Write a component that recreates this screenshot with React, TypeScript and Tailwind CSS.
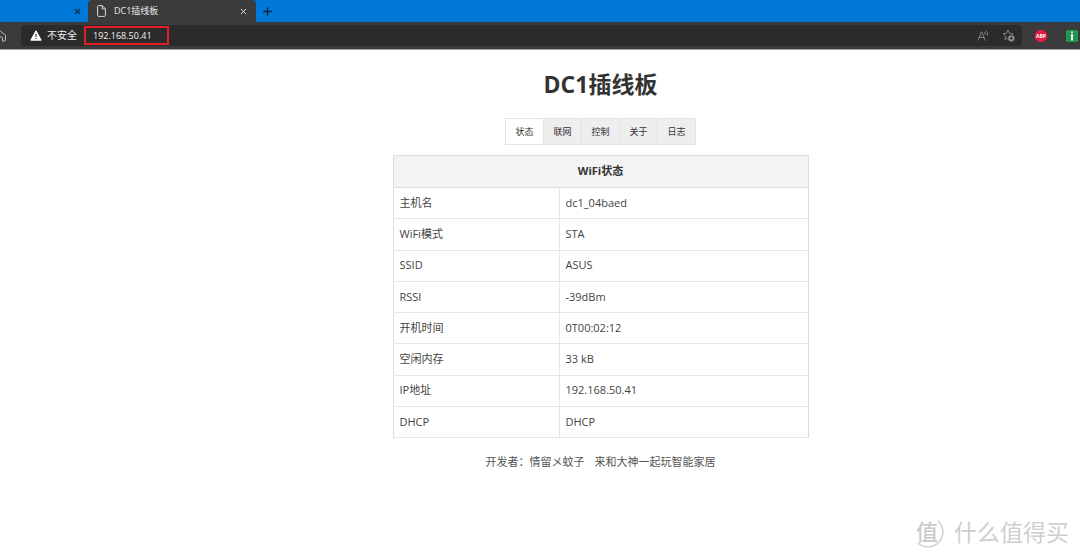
import { Plus, X } from 'lucide-react'

const tabs = ['状态', '联网', '控制', '关于', '日志']

const rows = [
    ['主机名', 'dc1_04baed'],
    ['WiFi模式', 'STA'],
    ['SSID', 'ASUS'],
    ['RSSI', '-39dBm'],
    ['开机时间', '0T00:02:12'],
    ['空闲内存', '33 kB'],
    ['IP地址', '192.168.50.41'],
    ['DHCP', 'DHCP'],
]

function TabStrip() {
    return (
        <div className="flex h-[22px] items-stretch bg-[#0078d7]">
            <div className="flex w-[88px] items-center justify-end pr-[6px]">
                <button aria-label="关闭标签页" className="text-[#10304c]">
                    <X size={9} strokeWidth={3} />
                </button>
            </div>
            <div className="flex w-[168px] items-center rounded-t bg-[#3b3b3b] pr-2 pl-[9px] text-[#e6e6e6]">
                <svg width="9" height="12" viewBox="0 0 9 12" fill="none" stroke="#d8d8d8" strokeLinejoin="round">
                    <path d="M1.5.6h3.8l3.1 3.2v6.6a1 1 0 0 1-1 1H1.6a1 1 0 0 1-1-1V1.6a1 1 0 0 1 .9-1z" />
                    <path d="M5.2.8v3.1h3" />
                </svg>
                <span className="ml-2 flex-1 text-[9px]">DC1插线板</span>
                <button aria-label="关闭标签页">
                    <X size={9} strokeWidth={2.5} />
                </button>
            </div>
            <button aria-label="新建标签页" className="ml-[5px] text-[#08263f]">
                <Plus size={13} strokeWidth={2.5} />
            </button>
        </div>
    )
}

function Toolbar() {
    return (
        <div className="flex h-7 items-center border-b border-[#a5a5a5] bg-[#3b3b3b]">
            <button aria-label="主页" className="flex w-[21px] shrink-0">
                <svg width="7" height="12" viewBox="0 0 7 12" fill="none" stroke="#bdbdbd" strokeLinejoin="round">
                    <path d="M-5 4.8 0 .8l5.5 4.4v5a.8.8 0 0 1-.8.8H2.5V7.8a.8.8 0 0 0-.8-.8H-1" />
                </svg>
            </button>
            <div className="flex h-[21px] flex-1 items-center rounded bg-[#2b2b2b] pr-[7px] pl-[9px]">
                <svg width="12" height="11" viewBox="0 0 12 11">
                    <path d="M6 .8 11.2 10.2H.8z" fill="#fff" stroke="#fff" strokeWidth="1" strokeLinejoin="round" />
                    <path d="M6 3.7v3.2M6 8v1.1" stroke="#2b2b2b" strokeWidth="1.1" />
                </svg>
                <span className="ml-[5px] text-[10px] text-[#f2f2f2]">不安全</span>
                <label className="ml-[7px] flex h-[19px] w-[85px] items-center border-2 border-[#e01e26] pl-[7px]">
                    <input
                        aria-label="地址"
                        defaultValue="192.168.50.41"
                        className="w-full text-[9px] text-[#f2f2f2] outline-none"
                    />
                </label>
                <div className="flex-1" />
                <button aria-label="朗读此页内容">
                    <svg width="12" height="12" viewBox="0 0 12 12" fill="none" stroke="#8c8c8c" strokeWidth="0.9">
                        <path d="M1 10.5 4.4 1.8h.4l3.4 8.7M2.2 7.5h4.8" />
                        <path d="M7.4 2.2q1 1 .8 2.6M9 .8q2 1.9 1.5 4.6" />
                    </svg>
                </button>
                <button aria-label="收藏" className="ml-[13px]">
                    <svg width="13" height="13" viewBox="0 0 13 13" fill="none">
                        <path
                            d="M6 1 7.5 4.2l3.5.5-2.5 2.4.6 3.5L6 9l-3.1 1.6.6-3.5L1 4.7l3.5-.5z"
                            stroke="#8c8c8c"
                            strokeWidth="0.9"
                            strokeLinejoin="round"
                        />
                        <circle cx="9.3" cy="9.3" r="3.4" fill="#9a9a9a" stroke="#2b2b2b" strokeWidth="0.5" />
                        <path d="M7.6 9.3h3.4M9.3 7.6v3.4" stroke="#2b2b2b" strokeWidth="1" />
                    </svg>
                </button>
            </div>
            <div className="flex w-[58px] shrink-0 items-center pl-[13px]">
                <button aria-label="Adblock Plus">
                    <svg width="12" height="12" viewBox="0 0 12 12">
                        <path d="M3.5 0h5L12 3.5v5L8.5 12h-5L0 8.5v-5z" fill="#e31b40" />
                        <text x="6" y="8" textAnchor="middle" fill="#fff" fontSize="5" fontWeight="700" fontFamily="Open Sans">
                            ABP
                        </text>
                    </svg>
                </button>
                <button aria-label="扩展" className="ml-[19px]">
                    <svg width="12" height="12" viewBox="0 0 12 12">
                        <rect width="12" height="12" rx="1.5" fill="#219653" />
                        <path d="M6 1.5v1.6M6 4v6.5" stroke="#fff" strokeWidth="1.8" />
                    </svg>
                </button>
            </div>
        </div>
    )
}

function Watermark() {
    return (
        <div className="absolute right-[11px] bottom-2 flex items-center gap-[9px] text-[#cfcfcf]">
            <svg width="32" height="38" viewBox="0 0 32 38" className="overflow-visible">
                <path d="M25 8A14 14 0 1 1 5 30" fill="none" stroke="#d0d0d0" strokeWidth="1.5" />
                <text
                    x="14"
                    y="27"
                    textAnchor="middle"
                    fill="#cacaca"
                    fontSize="22"
                    fontWeight="500"
                    fontFamily="Noto Sans CJK SC"
                >
                    值
                </text>
            </svg>
            <span className="text-[23px] leading-[36px]">什么值得买</span>
        </div>
    )
}

export default function App() {
    return (
        <div className="relative flex min-h-screen flex-col bg-white font-['Open_Sans','Noto_Sans_CJK_SC',sans-serif]">
            <header>
                <TabStrip />
                <Toolbar />
            </header>

            <main className="flex flex-col items-center pt-4 pl-[121px] text-[11px] text-[#444]">
                <h1 className="text-[23px] leading-9 font-bold text-[#333]">DC1插线板</h1>

                <nav className="mt-4 flex border border-[#e3e3e3] text-[9px] leading-[25px] text-[#333]">
                    {tabs.map((tab, i) => (
                        <button
                            key={tab}
                            className={
                                i === 0
                                    ? 'w-[37px] bg-white'
                                    : 'w-[38px] border-l border-[#e3e3e3] bg-[#eeeeee]'
                            }
                        >
                            {tab}
                        </button>
                    ))}
                </nav>

                <table className="mt-[10px] h-[283px] w-full max-w-[416px] table-fixed border-collapse border border-[#dddddd] text-left">
                    <colgroup>
                        <col className="w-2/5" />
                        <col />
                    </colgroup>
                    <thead>
                        <tr className="h-8 bg-[#f4f4f4] text-[#333]">
                            <th colSpan={2} className="border-b border-[#dddddd] text-center font-bold">
                                WiFi状态
                            </th>
                        </tr>
                    </thead>
                    <tbody>
                        {rows.map(([name, value]) => (
                            <tr key={name} className="border-b border-[#e6e6e6]">
                                <td className="border-r border-[#e6e6e6] px-[6px]">{name}</td>
                                <td className="px-[6px]">{value}</td>
                            </tr>
                        ))}
                    </tbody>
                </table>

                <footer className="mt-4 flex gap-[10px] leading-4 text-[#555]">
                    <span>开发者：情留メ蚊子</span>
                    <a href="#">来和大神一起玩智能家居</a>
                </footer>
            </main>

            <Watermark />
        </div>
    )
}
